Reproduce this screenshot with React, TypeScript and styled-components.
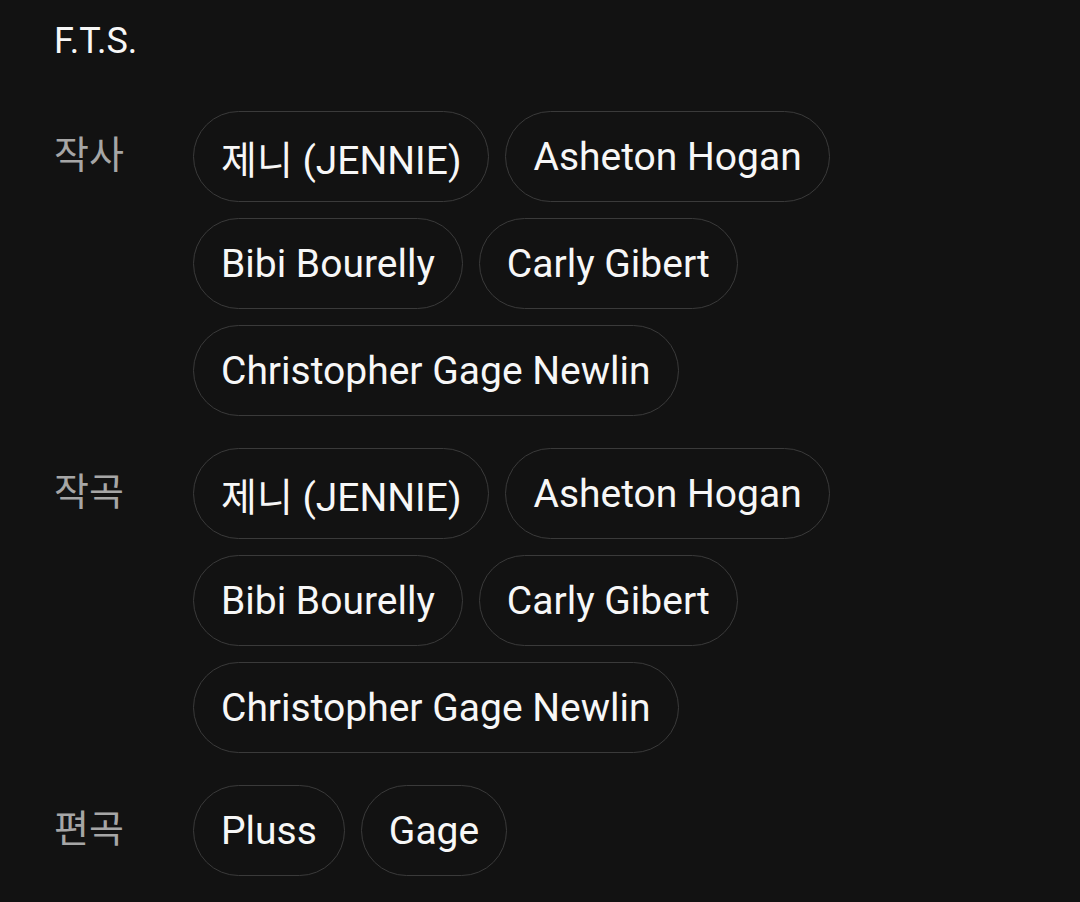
import React from "react";
import styled, { createGlobalStyle } from "styled-components";

const Global = createGlobalStyle`
  html, body { margin: 0; padding: 0; background: #121212; }
  body { font-family: Roboto, "Noto Sans CJK KR", sans-serif; }
`;

const Page = styled.div`
  min-height: 902px;
  background: #121212;
  padding: 20px 54px 0 54px;
  box-sizing: border-box;
`;

const Title = styled.h1`
  margin: 0 0 49px 0;
  font-size: 36px;
  font-weight: 400;
  line-height: 42px;
  color: #f7f7f7;
`;

const Groups = styled.div`
  display: flex;
  flex-direction: column;
  gap: 32px;
`;

const Group = styled.div`
  display: grid;
  grid-template-columns: 139px 1fr;
  align-items: start;
`;

const Label = styled.div`
  height: 91px;
  box-sizing: border-box;
  padding-bottom: 10px;
  display: flex;
  align-items: center;
  font-size: 38px;
  color: #a6a6a6;
`;

const Chips = styled.div`
  display: flex;
  flex-wrap: wrap;
  gap: 16px;
`;

const Chip = styled.div`
  height: 91px;
  box-sizing: border-box;
  display: flex;
  align-items: center;
  padding: 0 27px;
  border: 1px solid #3a3a3a;
  border-radius: 46px;
  font-size: 39px;
  color: #f7f7f7;
  white-space: nowrap;
`;

const data: { label: string; names: string[] }[] = [
  { label: "작사", names: ["제니 (JENNIE)", "Asheton Hogan", "Bibi Bourelly", "Carly Gibert", "Christopher Gage Newlin"] },
  { label: "작곡", names: ["제니 (JENNIE)", "Asheton Hogan", "Bibi Bourelly", "Carly Gibert", "Christopher Gage Newlin"] },
  { label: "편곡", names: ["Pluss", "Gage"] },
];

export default function App() {
  return (
    <>
      <Global />
      <Page>
        <Title>F.T.S.</Title>
        <Groups>
          {data.map((g) => (
            <Group key={g.label}>
              <Label>{g.label}</Label>
              <Chips>
                {g.names.map((n, i) => (
                  <Chip key={i}>{n}</Chip>
                ))}
              </Chips>
            </Group>
          ))}
        </Groups>
      </Page>
    </>
  );
}
